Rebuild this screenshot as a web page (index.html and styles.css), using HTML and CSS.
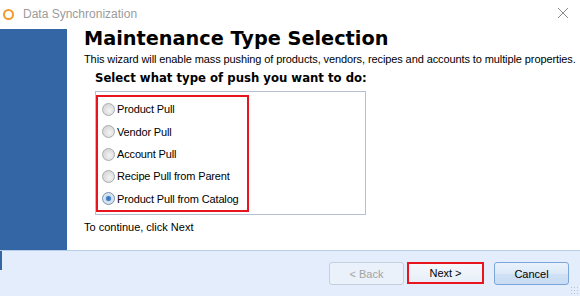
FILE: index.html
```html
<!DOCTYPE html>
<html>
<head>
<meta charset="utf-8">
<link rel="stylesheet" href="styles.css">
</head>
<body>
<div class="window">
  <div class="titlebar">
    <span class="app-icon"></span>
    <span class="title">Data Synchronization</span>
    <svg class="close" width="12" height="12" viewBox="0 0 12 12"><path d="M1 1L11 11M11 1L1 11" stroke="#8a8a8a" stroke-width="1" fill="none"/></svg>
  </div>
  <div class="main">
    <div class="side"></div>
    <div class="content">
      <h1 class="heading">Maintenance Type Selection</h1>
      <p class="desc">This wizard will enable mass pushing of products, vendors, recipes and accounts to multiple properties.</p>
      <div class="question">Select what type of push you want to do:</div>
      <div class="group">
        <div class="options">
          <label class="opt"><span class="radio"></span>Product Pull</label>
          <label class="opt"><span class="radio"></span>Vendor Pull</label>
          <label class="opt"><span class="radio"></span>Account Pull</label>
          <label class="opt"><span class="radio"></span>Recipe Pull from Parent</label>
          <label class="opt"><span class="radio checked"></span>Product Pull from Catalog</label>
        </div>
      </div>
      <p class="hint">To continue, click Next</p>
    </div>
  </div>
  <div class="footer">
    <span class="edge"></span>
    <div class="buttons">
      <button class="btn disabled">&lt; Back</button>
      <button class="btn next">Next &gt;</button>
      <button class="btn cancel">Cancel</button>
    </div>
    <span class="grip"></span>
  </div>
</div>
</body>
</html>
```
FILE: styles.css
```css
html, body {
  margin: 0;
  padding: 0;
  background: #ffffff;
}
.window {
  width: 580px;
  height: 296px;
  display: flex;
  flex-direction: column;
  font-family: "DejaVu Sans", Verdana, sans-serif;
  color: #000;
  overflow: hidden;
}
.titlebar {
  height: 29px;
  flex-shrink: 0;
  display: flex;
  align-items: center;
  background: #fff;
}
.app-icon {
  width: 7px;
  height: 7px;
  border: 2px solid #f39a2e;
  border-radius: 50%;
  margin-left: 3px;
  margin-top: -1px;
  flex-shrink: 0;
}
.title {
  margin-left: 9px;
  font-family: "Liberation Sans", Arial, sans-serif;
  font-size: 12px;
  color: #9b9b9b;
  margin-top: -1px;
}
.close {
  margin-left: auto;
  margin-right: 11px;
  margin-top: -3px;
}
.main {
  height: 221px;
  flex-shrink: 0;
  display: flex;
}
.side {
  width: 67px;
  flex-shrink: 0;
  background: #3466a5;
}
.content {
  flex: 1;
  min-width: 0;
  padding-left: 17px;
}
.heading {
  margin: -2px 0 0 0;
  font-size: 19.3px;
  line-height: 24px;
  font-weight: bold;
  white-space: nowrap;
}
.desc {
  margin: 0;
  font-family: "Liberation Sans", Arial, sans-serif;
  font-size: 11px;
  letter-spacing: -0.1px;
  line-height: 17px;
  white-space: nowrap;
}
.question {
  margin-left: 11px;
  margin-top: 2px;
  font-size: 11.7px;
  font-weight: bold;
  line-height: 17px;
  white-space: nowrap;
}
.group {
  margin-left: 11px;
  margin-top: 4px;
  width: 271px;
  height: 124px;
  border: 1px solid #b5c0d3;
  box-sizing: border-box;
  padding: 3px 0 0 0;
}
.options {
  width: 153px;
  height: 117px;
  box-sizing: border-box;
  border: 2px solid #e8151f;
  display: flex;
  flex-direction: column;
  padding-top: 1px;
}
.opt {
  height: 23px;
  display: flex;
  align-items: center;
  font-family: "Liberation Sans", Arial, sans-serif;
  font-size: 11px;
  letter-spacing: -0.15px;
  white-space: nowrap;
}
.radio {
  width: 11px;
  height: 11px;
  border-radius: 50%;
  border: 1px solid #a8acb2;
  background: radial-gradient(circle at 60% 60%, #f4f4f4 0%, #dcdcdc 60%, #cfd1d4 100%);
  margin: 0 2px 0 4px;
  box-sizing: content-box;
  flex-shrink: 0;
}
.radio.checked {
  border-color: #7a8fa8;
  background: radial-gradient(circle, #2f6fb7 0%, #4a86c8 28%, #cfe0f0 40%, #e6edf4 100%);
}
.hint {
  margin: 5px 0 0 0;
  font-family: "Liberation Sans", Arial, sans-serif;
  font-size: 11px;
  line-height: 14px;
}
.footer {
  flex: 1;
  background: #e3edfb;
  border-top: 1px solid #b8cde6;
  position: relative;
  display: flex;
  justify-content: flex-end;
}
.edge {
  position: absolute;
  left: 0;
  top: 0;
  width: 2px;
  height: 19px;
  background: #3466a5;
}
.buttons {
  display: flex;
  gap: 3px;
  margin-top: 11px;
  margin-right: 11px;
  align-items: flex-start;
}
.btn {
  width: 75px;
  height: 23px;
  font-family: "Liberation Sans", Arial, sans-serif;
  font-size: 11px;
  font-weight: normal;
  border-radius: 3px;
  padding: 0;
  color: #000;
}
.btn.disabled {
  border: 1px solid #c4d0dd;
  background: #eaf1fa;
  color: #a3a3a3;
}
.btn.next {
  width: 77px;
  height: 22px;
  border: 2px solid #e8151f;
  border-radius: 0;
  background: linear-gradient(#f5f8fc, #e7eef7);
  margin-right: 7px;
}
.btn.cancel {
  border: 1px solid #7aa7d8;
  background: linear-gradient(#e9f2fc, #dce9f8 50%, #d0e1f5 51%, #c8dcf3);
}
.grip {
  position: absolute;
  right: 2px;
  bottom: 2px;
  width: 8px;
  height: 8px;
  background-image: radial-gradient(circle, #b9c4d1 1px, transparent 1px);
  background-size: 3px 3px;
}
```
